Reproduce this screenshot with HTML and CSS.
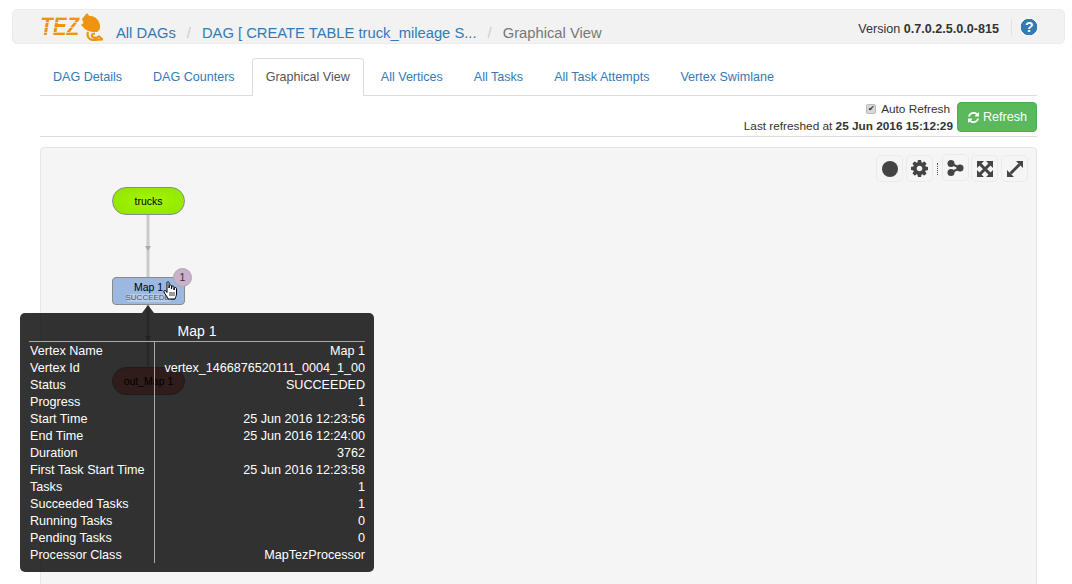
FILE: index.html
```html
<!DOCTYPE html>
<html lang="en">
<head>
    <meta charset="UTF-8">
    <title>Tez UI - Graphical View</title>
    <link rel="stylesheet" href="styles.css">
</head>
<body>
    <nav class="topbar">
        <div class="logo">
            <span class="logo-text">TEZ</span>
            <svg class="logo-mark" width="22" height="28" viewBox="0 0 22 28">
                <path d="M6 0 L8.500 3 C14 2.500 18.500 7 19 13 C19.300 16 18 18 16 19 L12 19 C8 18.500 4 17 2 14 L0 12 L2.500 10 L1 6 Z" fill="#ef9312"/>
                <path d="M7 19 C5.500 23 8 27 12 27 C15 27 18 26.500 21.500 26.500 L18 23.500 C16 25 13 25 11.500 24 C10 22.500 11 20.500 14 20.500" fill="none" stroke="#ef9312" stroke-width="2.200"/>
            </svg>
        </div>
        <ol class="crumbs">
            <li><a href="#">All DAGs</a></li>
            <li class="sep">/</li>
            <li><a href="#">DAG [ CREATE TABLE truck_mileage S...</a></li>
            <li class="sep">/</li>
            <li class="crumb-current">Graphical View</li>
        </ol>
        <div class="version">Version <b>0.7.0.2.5.0.0-815</b></div>
        <div class="help">?</div>
    </nav>

    <main class="content">
        <ul class="tabs">
            <li><a href="#">DAG Details</a></li>
            <li><a href="#">DAG Counters</a></li>
            <li class="active"><a href="#">Graphical View</a></li>
            <li><a href="#">All Vertices</a></li>
            <li><a href="#">All Tasks</a></li>
            <li><a href="#">All Task Attempts</a></li>
            <li><a href="#">Vertex Swimlane</a></li>
        </ul>

        <div class="refresh-bar">
            <div class="refresh-info">
                <label><input type="checkbox" checked> Auto Refresh</label>
                <div>Last refreshed at <b>25 Jun 2016 15:12:29</b></div>
            </div>
            <button class="refresh-btn">
                <svg width="13" height="13" viewBox="0 0 1792 1792"><path fill="#fff" d="M1639 1056q0 5-1 7-64 268-268 434.5t-478 166.5q-146 0-282.5-55t-243.5-157l-129 129q-19 19-45 19t-45-19-19-45v-448q0-26 19-45t45-19h448q26 0 45 19t19 45-19 45l-137 137q71 66 161 102t187 36q134 0 250-65t186-179q11-17 53-117 8-23 30-23h192q13 0 22.5 9.5t9.5 22.5zm25-800v448q0 26-19 45t-45 19h-448q-26 0-45-19t-19-45 19-45l138-138q-148-137-349-137-134 0-250 65t-186 179q-11 17-53 117-8 23-30 23h-199q-13 0-22.5-9.5t-9.5-22.5v-7q65-268 270-434.5t480-166.5q146 0 284 55.5t245 156.5l130-129q19-19 45-19t45 19 19 45z"/></svg>
                Refresh
            </button>
        </div>

        <section class="graph">
            <div class="tools">
                <span class="tool"><svg width="16" height="16" viewBox="0 0 16 16"><circle cx="8" cy="8" r="8" fill="#444"/></svg></span>
                <span class="tool"><svg width="17" height="17" viewBox="128 128 1536 1536"><path fill="#444" d="M1152 896q0-106-75-181t-181-75-181 75-75 181 75 181 181 75 181-75 75-181zm512-109v222q0 12-8 23t-20 13l-185 28q-19 54-39 91 35 50 107 138 10 12 10 25t-9 23q-27 37-99 108t-94 71q-12 0-26-9l-138-108q-44 23-91 38-16 136-29 186-7 28-36 28h-222q-14 0-24.500-8.500t-11.500-21.500l-28-184q-49-16-90-37l-141 107q-10 9-25 9-14 0-25-11-126-114-165-168-7-10-7-23 0-12 8-23 15-21 51-66.500t54-70.500q-27-50-41-99l-183-27q-13-2-21-12.500t-8-23.500v-222q0-12 8-23t19-13l186-28q14-46 39-92-40-57-107-138-10-12-10-24 0-10 9-23 26-36 98.500-107.500t94.500-71.500q13 0 26 10l138 107q44-23 91-38 16-136 29-186 7-28 36-28h222q14 0 24.500 8.500t11.500 21.500l28 184q49 16 90 37l142-107q9-9 24-9 13 0 25 10 129 119 165 170 7 8 7 22 0 12-8 23-15 21-51 66.500t-54 70.500q26 50 41 98l183 28q13 2 21 12.500t8 23.500z"/></svg></span>
                <span class="tool-sep"></span>
                <span class="tool tool-raised"><svg width="17" height="16" viewBox="0 0 17 16"><path d="M4 3.500 L13 8 L4 12.500" fill="none" stroke="#444" stroke-width="2"/><circle cx="4" cy="3.500" r="3.500" fill="#444"/><circle cx="4" cy="12.500" r="3.500" fill="#444"/><circle cx="13" cy="8" r="3.500" fill="#444"/></svg></span>
                <span class="tool"><svg width="16" height="16" viewBox="0 0 16 16"><path d="M3 3 L13 13 M13 3 L3 13" stroke="#444" stroke-width="3"/><path d="M0 0 H7 L0 7 Z M16 0 V7 L9 0 Z M0 16 V9 L7 16 Z M16 16 H9 L16 9 Z" fill="#444"/></svg></span>
                <span class="tool"><svg width="16" height="16" viewBox="0 0 16 16"><path d="M3.500 12.500 L12.500 3.500" stroke="#444" stroke-width="3"/><path d="M9 0 H16 V7 Z M0 9 V16 H7 Z" fill="#444"/></svg></span>
            </div>

            <svg class="edges" width="200" height="300">
                <path d="M107 67 V219" stroke="#cbcbcb" stroke-width="3"/>
                <path d="M104 98 H110 L107 103 Z M104 188 H110 L107 193 Z" fill="#aaa"/>
            </svg>

            <div class="node node-input">trucks</div>
            <div class="node node-vertex">
                <span>Map 1</span>
                <small>SUCCEEDED</small>
            </div>
            <div class="badge">1</div>
            <svg class="hand" width="15" height="19" viewBox="0 0 15 19">
                <path d="M4 1.500 C4 .5 6 .5 6 1.500 V7 L6.500 4.500 C7 3.500 8.500 3.800 8.500 5 V8 L9 5.500 C9.500 4.700 11 5 11 6 V9 L11.300 7 C11.800 6.200 13.500 6.400 13.500 7.500 V13 C13.500 15 12.500 16 12 18 H5 C4.500 15.500 2 13.500 1 11 C.5 9.500 2 8.800 3 10 L4 11.500 Z" fill="#fff" stroke="#000" stroke-width="1"/>
                <path d="M7 11 V15 M9 11 V15 M11 11 V15" stroke="#000" stroke-width=".8"/>
            </svg>
            <div class="node node-output">out_Map 1</div>

            <div class="tooltip">
                <div class="tooltip-arrow"></div>
                <div class="tooltip-title">Map 1</div>
                <div class="tooltip-table">
                    <div class="keys">
                        <div>Vertex Name</div>
                        <div>Vertex Id</div>
                        <div>Status</div>
                        <div>Progress</div>
                        <div>Start Time</div>
                        <div>End Time</div>
                        <div>Duration</div>
                        <div>First Task Start Time</div>
                        <div>Tasks</div>
                        <div>Succeeded Tasks</div>
                        <div>Running Tasks</div>
                        <div>Pending Tasks</div>
                        <div>Processor Class</div>
                    </div>
                    <div class="values">
                        <div>Map 1</div>
                        <div>vertex_1466876520111_0004_1_00</div>
                        <div>SUCCEEDED</div>
                        <div>1</div>
                        <div>25 Jun 2016 12:23:56</div>
                        <div>25 Jun 2016 12:24:00</div>
                        <div>3762</div>
                        <div>25 Jun 2016 12:23:58</div>
                        <div>1</div>
                        <div>1</div>
                        <div>0</div>
                        <div>0</div>
                        <div>MapTezProcessor</div>
                    </div>
                </div>
            </div>
        </section>
    </main>
</body>
</html>
```

FILE: styles.css
```css
html, body {
    height: 584px;
    overflow: hidden;
}

body {
    margin: 0;
    font-family: "Liberation Sans", Arial, sans-serif;
    font-size: 13px;
    color: #333;
    background: #fff;
}

a {
    color: #337ab7;
    text-decoration: none;
}

/* top bar */
.topbar {
    display: flex;
    align-items: center;
    height: 33px;
    margin: 9px 7px 0 12px;
    padding-left: 27px;
    background: #f2f2f2;
    border: 1px solid #ececec;
    border-radius: 5px;
}

.logo {
    display: flex;
    align-items: flex-start;
    width: 63px;
    height: 28px;
    margin-right: 13px;
}

.logo-text {
    width: 50px;
    margin-right: -9px;
    font-size: 26px;
    font-weight: bold;
    font-style: italic;
    line-height: 26px;
    color: transparent;
    background: repeating-linear-gradient(to bottom, #ef9312 0, #ef9312 4px, #f8cf94 4px, #f8cf94 5px);
    -webkit-background-clip: text;
    background-clip: text;
    transform: scaleX(0.8);
    transform-origin: left top;
}

.crumbs {
    display: flex;
    flex: 1;
    align-items: center;
    margin: 13px 0 0;
    padding: 0;
    list-style: none;
    font-size: 14.75px;
}

.crumbs .sep {
    margin: 0 11px;
    color: #ccc;
}

.crumb-current {
    color: #777;
}

.version {
    font-size: 12.6px;
    margin-right: 12px;
    margin-top: 5px;
}

.help {
    width: 16px;
    height: 16px;
    margin: 1px 27px 0 0;
    padding-left: 9px;
    border-left: 1px solid #e2e2e2;
    background: radial-gradient(circle at 17px 8px, #337ab7 8px, transparent 8.5px);
    color: #fff;
    font-size: 14px;
    font-weight: bold;
    line-height: 16px;
    text-indent: 4px;
}

/* main column */
.content {
    margin: 14px 35px 0 40px;
}

.tabs {
    display: flex;
    height: 37px;
    margin: 0;
    padding: 0;
    list-style: none;
    border-bottom: 1px solid #ddd;
    font-size: 12.55px;
}

.tabs li {
    margin-right: 3px;
}

.tabs li:first-child {
    margin-left: -1px;
}

.tabs a {
    display: block;
    height: 37px;
    padding: 0 13px;
    line-height: 37px;
    border: 1px solid transparent;
    border-width: 1px 1px 0;
    border-radius: 4px 4px 0 0;
}

.tabs .active a {
    color: #555;
    background: #fff;
    border-color: #ddd;
}

.refresh-bar {
    display: flex;
    justify-content: flex-end;
    align-items: flex-start;
    height: 41px;
    padding-top: 6px;
    box-sizing: border-box;
    border-bottom: 1px solid #ddd;
}

.refresh-info {
    margin: -1px 4px 0 0;
    text-align: right;
    font-size: 11.8px;
    line-height: 17px;
}

.refresh-info label {
    display: block;
    margin-right: 3px;
}

.refresh-info input {
    appearance: none;
    position: relative;
    width: 10px;
    height: 10px;
    margin: 0 3px 0 0;
    vertical-align: -1px;
    background: #d8d8d8;
    border: 1px solid #bbb;
    border-radius: 2px;
}

.refresh-info input::after {
    content: "\2714";
    position: absolute;
    left: 1px;
    top: -2px;
    color: #333;
    font-size: 8px;
    line-height: 12px;
}

.refresh-btn {
    display: flex;
    align-items: center;
    justify-content: center;
    gap: 3px;
    width: 80px;
    height: 30px;
    padding: 0;
    color: #fff;
    font: inherit;
    font-size: 12.6px;
    background: #5cb85c;
    border: 1px solid #4cae4c;
    border-radius: 4px;
}

/* graph canvas */
.graph {
    position: relative;
    height: 460px;
    margin-top: 10px;
    background: #f5f5f5;
    border: 1px solid #e6e6e6;
    border-radius: 4px;
}

.edges {
    position: absolute;
    left: 0;
    top: 0;
}

.tools {
    position: absolute;
    top: 7px;
    right: 8px;
    display: flex;
    align-items: center;
    gap: 3px;
}

.tool {
    display: flex;
    align-items: center;
    justify-content: center;
    width: 25px;
    height: 25px;
    border: 1px solid #ebebeb;
    border-radius: 5px;
}

.tool-raised {
    margin: -2px -1px 0 0;
}

.tool-sep {
    height: 12px;
    margin: 0 1px;
    border-left: 1px dotted #555;
}

.node {
    position: absolute;
    left: 71px;
    width: 71px;
    height: 26px;
    border: 1px solid #8a8a8a;
    color: #000;
    font-size: 10.5px;
    text-align: center;
    line-height: 26px;
}

.node-input {
    top: 39px;
    border-radius: 14px;
    background: radial-gradient(ellipse at center, #a4f500, #90e400);
}

.node-vertex {
    top: 129px;
    border-radius: 4px;
    background: #9bb8e0;
    line-height: 1;
}

.node-vertex span {
    display: block;
    margin-top: 4px;
}

.node-vertex small {
    display: block;
    width: 46px;
    margin: 1px auto 0;
    color: #555;
    font-size: 8px;
    border-radius: 4px;
    background: #b6cdeb;
}

.node-output {
    top: 219px;
    border-radius: 14px;
    background: #ee8d84;
}

.badge {
    position: absolute;
    left: 132px;
    top: 120px;
    width: 17px;
    height: 17px;
    border: 1px solid #aaa;
    border-radius: 50%;
    background: #c9b0cc;
    font-size: 10.5px;
    line-height: 17px;
    text-align: center;
}

.hand {
    position: absolute;
    left: 122px;
    top: 133px;
}

.tooltip {
    position: absolute;
    left: -21px;
    top: 165px;
    width: 354px;
    height: 259px;
    color: #fff;
    background: rgba(0, 0, 0, 0.8);
    border-radius: 5px;
    font-size: 12.6px;
}

.tooltip-arrow {
    position: absolute;
    left: 122px;
    top: -8px;
    border: 6px solid transparent;
    border-top: 0;
    border-bottom: 8px solid rgba(0, 0, 0, 0.8);
}

.tooltip-title {
    height: 28px;
    margin: 0 9px;
    font-size: 14px;
    line-height: 36px;
    text-align: center;
    border-bottom: 1px solid #aaa;
}

.tooltip-table {
    display: flex;
    height: 221px;
    margin: 0 9px;
    line-height: 17px;
}

.keys {
    width: 126px;
    padding: 1px 0 0 1px;
    border-right: 1px solid #aaa;
    box-sizing: border-box;
}

.values {
    flex: 1;
    padding-top: 1px;
    text-align: right;
}
```
